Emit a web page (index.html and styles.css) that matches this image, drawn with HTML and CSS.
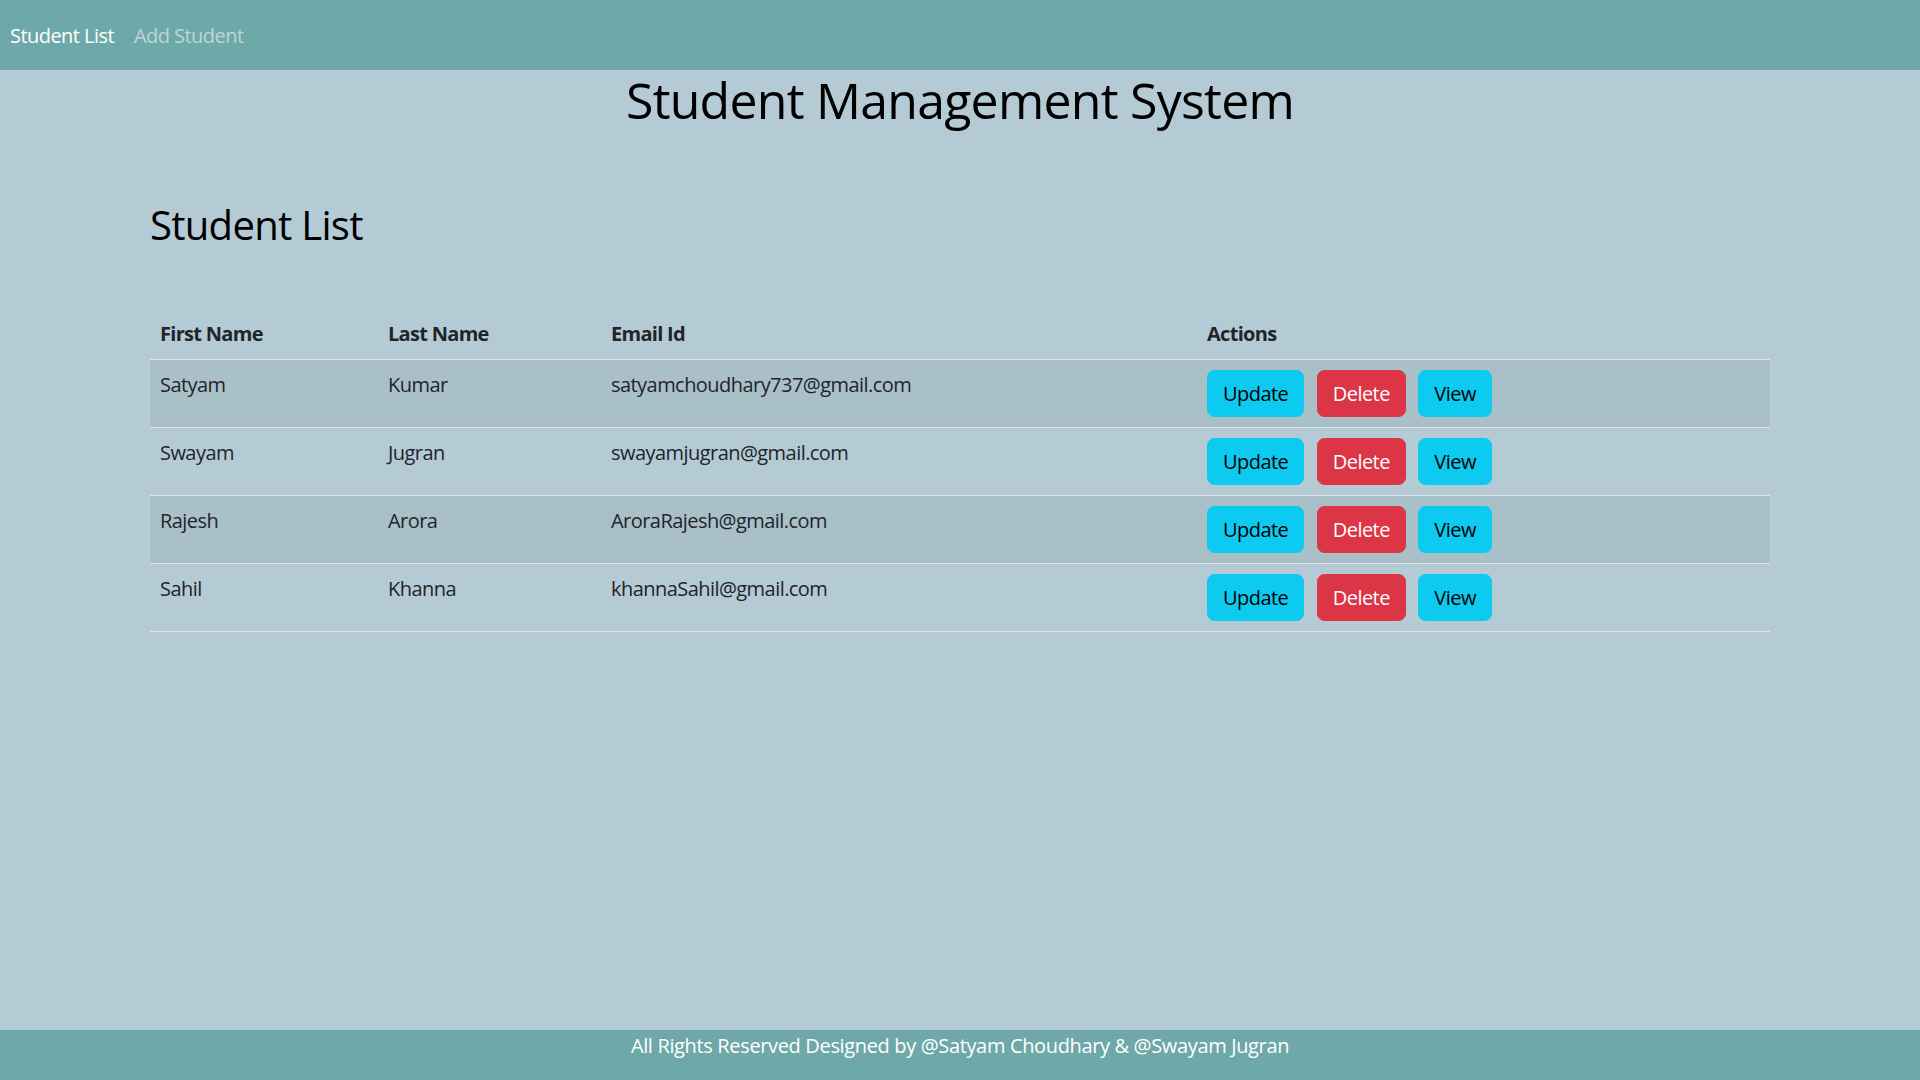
FILE: index.html
```html
<!DOCTYPE html>
<html lang="en">
<head>
<meta charset="utf-8">
<title>Student Management System</title>
<link rel="stylesheet" href="styles.css">
</head>
<body>
<div class="page">
  <nav class="navbar">
    <a class="nav-link active" href="#">Student List</a>
    <a class="nav-link" href="#">Add Student</a>
  </nav>
  <main class="main">
    <h1 class="title">Student Management System</h1>
    <div class="container">
      <h2 class="heading">Student List</h2>
      <table class="table">
        <colgroup>
          <col class="c1"><col class="c2"><col class="c3"><col class="c4">
        </colgroup>
        <thead>
          <tr><th>First Name</th><th>Last Name</th><th>Email Id</th><th>Actions</th></tr>
        </thead>
        <tbody>
          <tr class="odd">
            <td>Satyam</td><td>Kumar</td><td>satyamchoudhary737@gmail.com</td>
            <td><div class="actions"><button class="btn info">Update</button><button class="btn danger">Delete</button><button class="btn info">View</button></div></td>
          </tr>
          <tr>
            <td>Swayam</td><td>Jugran</td><td>swayamjugran@gmail.com</td>
            <td><div class="actions"><button class="btn info">Update</button><button class="btn danger">Delete</button><button class="btn info">View</button></div></td>
          </tr>
          <tr class="odd">
            <td>Rajesh</td><td>Arora</td><td>AroraRajesh@gmail.com</td>
            <td><div class="actions"><button class="btn info">Update</button><button class="btn danger">Delete</button><button class="btn info">View</button></div></td>
          </tr>
          <tr>
            <td>Sahil</td><td>Khanna</td><td>khannaSahil@gmail.com</td>
            <td><div class="actions"><button class="btn info">Update</button><button class="btn danger">Delete</button><button class="btn info">View</button></div></td>
          </tr>
        </tbody>
      </table>
    </div>
  </main>
  <footer class="footer">All Rights Reserved Designed by @Satyam Choudhary &amp; @Swayam Jugran</footer>
</div>
</body>
</html>
```

FILE: styles.css
```css
* { box-sizing: border-box; }
html, body { margin: 0; padding: 0; }
body {
  font-family: "Open Sans", "Noto Sans", sans-serif;
  font-size: 20px;
  line-height: 1.5;
  letter-spacing: -0.55px;
  color: #212529;
  background: #b4cbd5;
}
.page {
  min-height: 100vh;
  display: flex;
  flex-direction: column;
}
.navbar {
  height: 70px;
  background: #6ea8a8;
  display: flex;
  align-items: center;
  padding: 2px 10px 0;
  gap: 20px;
  flex-shrink: 0;
}
.nav-link {
  color: rgba(255, 255, 255, 0.55);
  text-decoration: none;
  font-size: 20px;
  line-height: 30px;
}
.nav-link.active { color: #fff; }
.main { flex: 1; }
.title {
  margin: 0 0 10px;
  text-align: center;
  font-size: 50px;
  font-weight: 500;
  line-height: 60px;
  color: #000;
  letter-spacing: -0.75px;
}
.container {
  width: 1650px;
  margin: 0 auto;
  padding: 0 15px;
}
.heading {
  margin: 71px 0 60px;
  font-size: 40px;
  font-weight: 500;
  line-height: 48px;
  color: #000;
  letter-spacing: -0.7px;
}
.table {
  width: 100%;
  border-collapse: collapse;
  color: #212529;
}
.c1 { width: 228px; }
.c2 { width: 223px; }
.c3 { width: 596px; }
.table th, .table td {
  text-align: left;
  vertical-align: top;
  padding: 10px;
  border-bottom: 1.25px solid #dee2e6;
}
.table th { font-weight: 700; letter-spacing: -0.7px; }
.table tr.odd td { background: #aac0c9; }
.actions { display: flex; gap: 12.5px; }
.btn {
  font-family: inherit;
  font-size: 20px;
  line-height: 30px;
  letter-spacing: -0.55px;
  padding: 7.5px 15px;
  border: 1.25px solid transparent;
  border-radius: 7.5px;
  cursor: pointer;
}
.btn.info { background: #0dcaf0; border-color: #0dcaf0; color: #000; }
.btn.danger { background: #dc3545; border-color: #dc3545; color: #fff; }
.footer {
  height: 50px;
  background: #6ea8a8;
  color: #fff;
  text-align: center;
  font-size: 20px;
  line-height: 30px;
  padding-top: 1px;
  letter-spacing: -0.35px;
  flex-shrink: 0;
}
```
